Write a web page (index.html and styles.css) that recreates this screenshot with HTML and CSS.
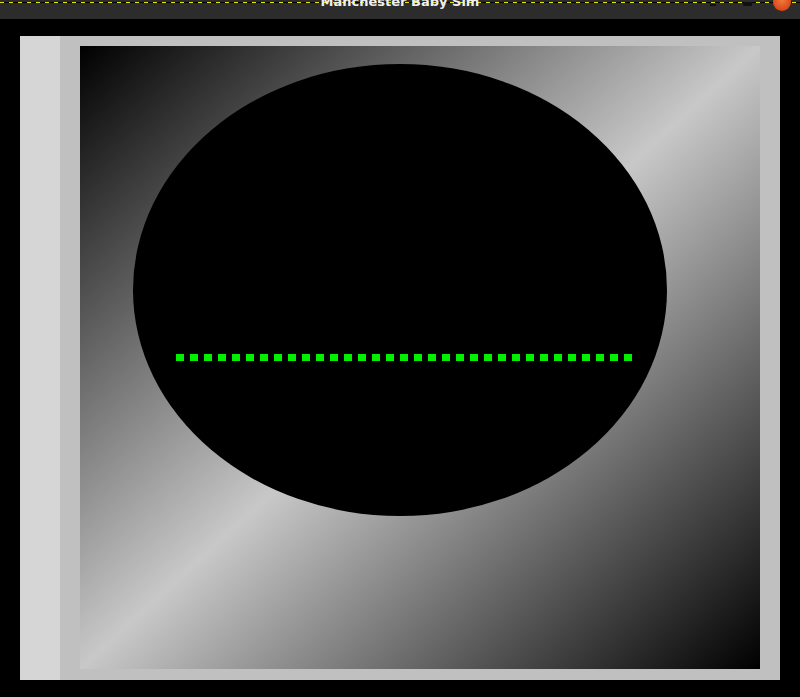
FILE: index.html
```html
<!DOCTYPE html>
<html>
<head>
<meta charset="utf-8">
<link rel="stylesheet" href="styles.css">
</head>
<body>
<div class="titlebar">
  <div class="dashes"></div>
  <div class="title">Manchester Baby Sim</div>
  <div class="btn-min"></div>
  <div class="btn-max"></div>
  <div class="btn-close"></div>
</div>
<div class="content">
  <div class="panel">
    <div class="strip"></div>
    <div class="frame">
      <div class="canvas">
        <svg width="680" height="623" viewBox="0 0 680 623">
          <ellipse cx="320" cy="244" rx="267" ry="226" fill="#000"/>
          <g fill="#00f000" id="dots"></g>
        </svg>
      </div>
    </div>
  </div>
</div>
<script>
  var g = document.getElementById('dots');
  for (var i = 0; i < 33; i++) {
    var r = document.createElementNS('http://www.w3.org/2000/svg', 'rect');
    r.setAttribute('x', 96 + i * 14);
    r.setAttribute('y', 308);
    r.setAttribute('width', 8);
    r.setAttribute('height', 7);
    g.appendChild(r);
  }
</script>
</body>
</html>
```

FILE: styles.css
```css
html, body {
  margin: 0;
  padding: 0;
  background: #000;
  width: 800px;
  height: 697px;
  overflow: hidden;
}
.titlebar {
  position: relative;
  height: 19px;
  background: #2c2c2c;
  overflow: hidden;
}
.dashes {
  position: absolute;
  left: 0;
  right: 0;
  top: 2px;
  height: 1px;
  background: repeating-linear-gradient(to right, #e6e600 0 4px, #000 4px 9px);
}
.title {
  position: absolute;
  left: 0;
  right: 0;
  top: -6px;
  text-align: center;
  font-family: "DejaVu Sans", sans-serif;
  font-weight: bold;
  font-size: 13px;
  line-height: 16px;
  color: #efefef;
}
.btn-min {
  position: absolute;
  left: 710px;
  top: 4px;
  width: 6px;
  height: 2px;
  background: #111;
}
.btn-max {
  position: absolute;
  left: 743px;
  top: 2px;
  width: 9px;
  height: 4px;
  background: #111;
  border-radius: 1px;
}
.btn-close {
  position: absolute;
  left: 773px;
  top: -7px;
  width: 18px;
  height: 18px;
  border-radius: 50%;
  background: radial-gradient(circle at 50% 40%, #f47a3c, #d9481a 70%, #b8380e);
}
.content {
  padding: 17px 0 0 20px;
}
.panel {
  display: flex;
  width: 760px;
  height: 644px;
}
.strip {
  width: 40px;
  background: #d6d6d6;
}
.frame {
  flex: 1;
  background: #c0c0c0;
  padding: 10px 20px 11px 20px;
}
.canvas {
  width: 680px;
  height: 623px;
  background: linear-gradient(to bottom right, #000 0%, #c8c8c8 50%, #000 100%);
}
.canvas svg {
  display: block;
}
```
